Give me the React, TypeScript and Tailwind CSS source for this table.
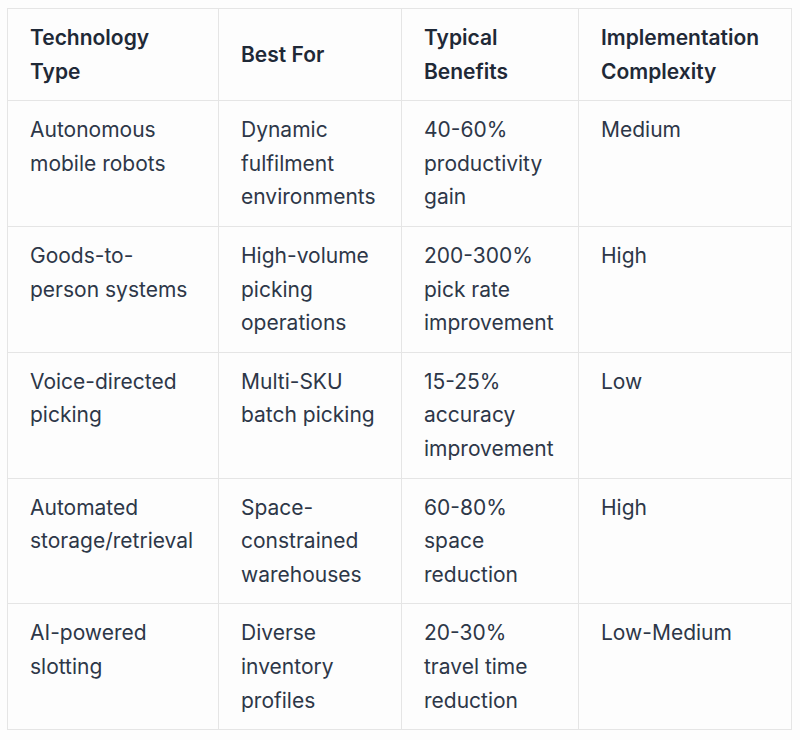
const rows = [
  ["Autonomous mobile robots", "Dynamic fulfilment environments", "40-60% productivity gain", "Medium"],
  ["Goods-to-person systems", "High-volume picking operations", "200-300% pick rate improvement", "High"],
  ["Voice-directed picking", "Multi-SKU batch picking", "15-25% accuracy improvement", "Low"],
  ["Automated storage/retrieval", "Space-constrained warehouses", "60-80% space reduction", "High"],
  ["AI-powered slotting", "Diverse inventory profiles", "20-30% travel time reduction", "Low-Medium"],
];

const headers = ["Technology Type", "Best For", "Typical Benefits", "Implementation Complexity"];

export default function App() {
  return (
    <div className="min-h-[740px] w-[800px] bg-[#fdfdfd] pl-[7px] pt-[8px] font-['Inter',sans-serif]">
      <table className="w-[784px] table-fixed border-collapse text-[21px] leading-[1.6]">
        <colgroup>
          <col className="w-[211px]" />
          <col className="w-[183px]" />
          <col className="w-[177px]" />
          <col className="w-[213px]" />
        </colgroup>
        <thead>
          <tr>
            {headers.map((h) => (
              <th
                key={h}
                className="border border-[#e5e5e5] py-3 pl-[22px] pr-6 text-left align-middle font-semibold text-[#1f2937]"
              >
                {h}
              </th>
            ))}
          </tr>
        </thead>
        <tbody>
          {rows.map((r) => (
            <tr key={r[0]}>
              {r.map((c, i) => (
                <td key={i} className="border border-[#e5e5e5] py-3 pl-[22px] pr-6 align-top text-[#2d3748]">
                  {c}
                </td>
              ))}
            </tr>
          ))}
        </tbody>
      </table>
    </div>
  );
}
